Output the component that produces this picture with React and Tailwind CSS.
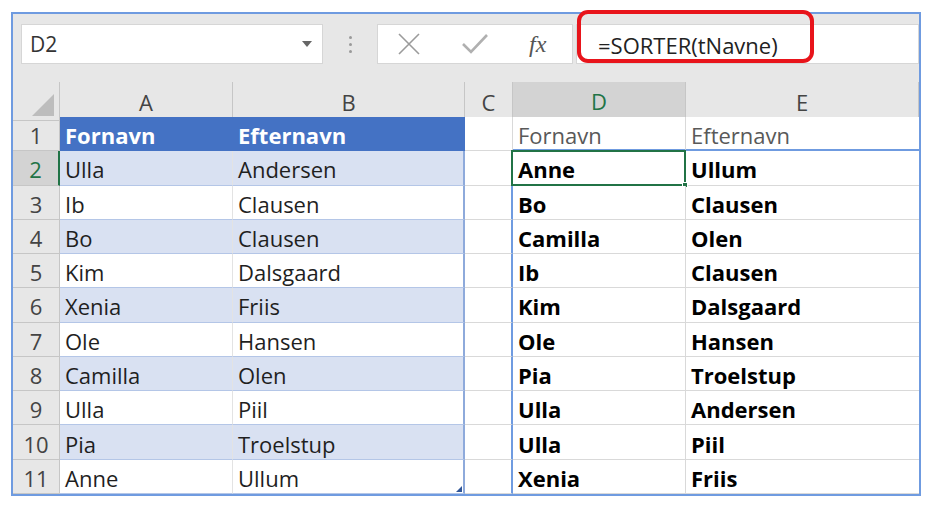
import React from "react";

const left = [
  ["Ulla", "Andersen"],
  ["Ib", "Clausen"],
  ["Bo", "Clausen"],
  ["Kim", "Dalsgaard"],
  ["Xenia", "Friis"],
  ["Ole", "Hansen"],
  ["Camilla", "Olen"],
  ["Ulla", "Piil"],
  ["Pia", "Troelstup"],
  ["Anne", "Ullum"],
];

const sorted = [
  ["Anne", "Ullum"],
  ["Bo", "Clausen"],
  ["Camilla", "Olen"],
  ["Ib", "Clausen"],
  ["Kim", "Dalsgaard"],
  ["Ole", "Hansen"],
  ["Pia", "Troelstup"],
  ["Ulla", "Andersen"],
  ["Ulla", "Piil"],
  ["Xenia", "Friis"],
];

const cols = "grid grid-cols-[47px_173px_232px_48px_173px_233px]";
const font = { fontFamily: "'Open Sans', 'Liberation Sans', sans-serif" };

function FormulaBar() {
  return (
    <div className="h-[68px] bg-[#e7e7e7] flex items-start pt-[10px] pl-[8px]">
      <div className="w-[302px] h-[40px] bg-white border border-[#d6d6d6] flex items-center pl-[8px] pr-[10px] justify-between">
        <span className="text-[21px] text-[#333] pt-[2px]">D2</span>
        <svg width="10" height="6" viewBox="0 0 10 6">
          <path d="M0 0 L10 0 L5 6 Z" fill="#666" />
        </svg>
      </div>
      <div className="w-[54px] h-[40px] flex flex-col items-center justify-center gap-[4px]">
        <span className="w-[3px] h-[3px] rounded-full bg-[#9a9a9a]" />
        <span className="w-[3px] h-[3px] rounded-full bg-[#9a9a9a]" />
        <span className="w-[3px] h-[3px] rounded-full bg-[#9a9a9a]" />
      </div>
      <div className="w-[196px] h-[40px] bg-white border border-[#d6d6d6] flex items-center pl-[19px] gap-[41px]">
        <svg width="24" height="24" viewBox="0 0 24 24">
          <path d="M2 2 L22 22 M22 2 L2 22" stroke="#9b9b9b" strokeWidth="1.6" />
        </svg>
        <svg width="26" height="22" viewBox="0 0 26 22">
          <path d="M1 11 L9 19 L25 2" stroke="#b0b0b0" strokeWidth="2.6" fill="none" />
        </svg>
        <span className="text-[24px] italic text-[#555]" style={{ fontFamily: "'Liberation Serif', serif" }}>
          fx
        </span>
      </div>
      <div className="flex-1 h-[40px] bg-white border border-[#d6d6d6] ml-[3px] flex items-center pl-[21px]">
        <span className="text-[22px] text-[#222] pt-[3px]">=SORTER(tNavne)</span>
      </div>
    </div>
  );
}

function HeaderRow() {
  const letters = ["A", "B", "C", "D", "E"];
  return (
    <div className={`${cols} h-[35px] bg-[#e7e7e7]`}>
      <div className="relative border-r border-b border-[#c6c6c6]">
        <svg className="absolute right-[5px] bottom-[4px]" width="22" height="22" viewBox="0 0 22 22">
          <path d="M22 0 L22 22 L0 22 Z" fill="#bdbdbd" />
        </svg>
      </div>
      {letters.map((l) =>
        l === "D" ? (
          <div key={l} className="flex items-center justify-center pt-[3px] bg-[#d3d3d3] border-r border-[#c6c6c6] border-b-[3px] border-b-[#217346] text-[22px] text-[#217346]">
            {l}
          </div>
        ) : (
          <div key={l} className="flex items-center justify-center pt-[3px] border-r border-b border-[#c6c6c6] text-[22px] text-[#444]">
            {l}
          </div>
        )
      )}
    </div>
  );
}

function Row({ n }) {
  const active = n === 2;
  const i = n - 2;
  const band = n % 2 === 0;
  const rowHead = active
    ? "bg-[#d3d3d3] text-[#217346] border-r-2 border-r-[#217346] border-b border-b-[#c6c6c6]"
    : "bg-[#e7e7e7] text-[#444] border-r border-b border-[#c6c6c6]";
  const cell = "flex items-center pl-[5px] pt-[3px]";

  let a, b;
  if (n === 1) {
    a = <div className={`${cell} bg-[#4472c4] text-white font-bold border-b border-[#4472c4]`}>Fornavn</div>;
    b = <div className={`${cell} bg-[#4472c4] text-white font-bold border-b border-[#4472c4]`}>Efternavn</div>;
  } else {
    const bg = band ? "bg-[#d9e1f2]" : "bg-white";
    a = (
      <div className={`${cell} ${bg} text-[#1f1f1f] border-r border-r-[#e3e3e3] border-b border-b-[#b4c6e7]`}>
        {left[i][0]}
      </div>
    );
    b = (
      <div className={`${cell} ${bg} relative text-[#1f1f1f] border-r-2 border-r-[#8eaadb] border-b border-b-[#b4c6e7]`}>
        {left[i][1]}
        {n === 11 && (
          <svg className="absolute right-[1px] bottom-[1px]" width="6" height="6" viewBox="0 0 6 6">
            <path d="M6 0 L6 6 L0 6 Z" fill="#2f5597" />
          </svg>
        )}
      </div>
    );
  }

  const c = (
    <div className={`bg-white border-b border-[#d9d9d9] ${n === 1 ? "border-r border-r-[#d9d9d9]" : "border-r-2 border-r-[#6f9be0]"}`} />
  );

  let d, e;
  if (n === 1) {
    d = <div className={`${cell} bg-white text-[#595959] border-r border-r-[#d9d9d9] border-b-2 border-b-[#6f9be0]`}>Fornavn</div>;
    e = <div className={`${cell} bg-white text-[#595959] border-b-2 border-b-[#6f9be0]`}>Efternavn</div>;
  } else {
    d = (
      <div className={`${cell} relative bg-white text-black font-bold border-r border-r-[#d9d9d9] border-b border-b-[#d9d9d9]`}>
        {sorted[i][0]}
        {active && (
          <div className="absolute -left-[2px] -top-[1px] -right-[1px] -bottom-[1px] border-2 border-[#217346]">
            <div className="absolute -right-[4px] -bottom-[4px] w-[6px] h-[6px] bg-[#217346] border border-white" />
          </div>
        )}
      </div>
    );
    e = (
      <div className={`${cell} bg-white text-black font-bold border-b border-b-[#d9d9d9]`}>
        {sorted[i][1]}
      </div>
    );
  }

  return (
    <div className={`${cols} text-[22px] leading-none`}>
      <div className={`${rowHead} flex items-center justify-center pt-[3px]`}>{n}</div>
      {a}
      {b}
      {c}
      {d}
      {e}
    </div>
  );
}

export default function App() {
  const rows = Array.from({ length: 11 }, (_, k) => k + 1);
  return (
    <div className="relative w-[929px] h-[507px] bg-white" style={font}>
      <div className="absolute left-[11px] top-[12px] w-[910px] h-[484px] border-2 border-[#6f9be0] overflow-hidden flex flex-col">
        <FormulaBar />
        <HeaderRow />
        <div className="grid grid-rows-[repeat(11,minmax(0,1fr))] h-[377px]">
          {rows.map((n) => (
            <Row key={n} n={n} />
          ))}
        </div>
      </div>
      <div className="absolute left-[577px] top-[10px] w-[237px] h-[53px] border-[4px] border-[#e8141b] rounded-[11px]" />
    </div>
  );
}
